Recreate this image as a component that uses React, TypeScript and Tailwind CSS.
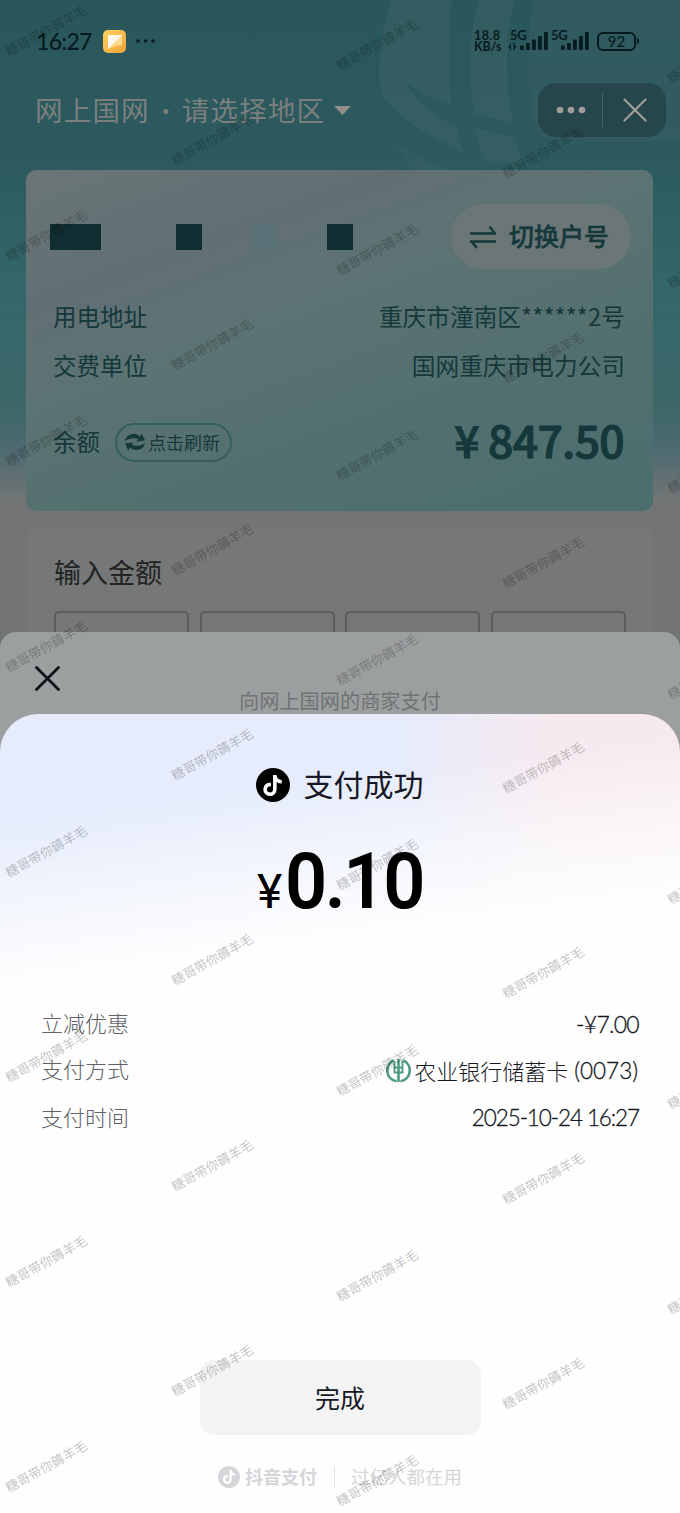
import { FaTiktok } from "react-icons/fa6"

const WATERMARK = "糖哥带你薅羊毛"

const marks: { x: number; y: number }[] = []
for (let col = 0; col < 5; col++) {
  const top = col % 2 === 0 ? 30 + (col / 2) * 13.5 : 138.5 + ((col - 1) / 2) * 13
  for (let row = 0; row < 8; row++) {
    const y = top + row * 205.2
    if (y < 1490) marks.push({ x: 46 + col * 165.5, y })
  }
}

function Watermarks() {
  return (
    <div className="pointer-events-none absolute inset-0 z-30 overflow-hidden">
      {marks.map((m, i) => (
        <span
          key={i}
          className="absolute -translate-x-1/2 -translate-y-1/2 -rotate-[29deg] whitespace-nowrap text-[13px] font-normal leading-none text-black/25"
          style={{ left: m.x, top: m.y }}
        >
          {WATERMARK}
        </span>
      ))}
    </div>
  )
}

function Signal() {
  return (
    <svg width="28" height="18" viewBox="0 0 28 18" fill="currentColor">
      <rect x="0" y="13.5" width="3.8" height="4.5" rx="1" />
      <rect x="6" y="11" width="3.8" height="7" rx="1" />
      <rect x="12" y="7.5" width="3.8" height="10.5" rx="1" />
      <rect x="18" y="4" width="3.8" height="14" rx="1" />
      <rect x="24" y="0" width="3.8" height="18" rx="1" />
    </svg>
  )
}

function StatusBar() {
  return (
    <div className="flex h-[82px] items-center pl-[36px] pr-[41px] text-[#061b1d]">
      <span className="w-[56px] whitespace-nowrap font-['Lato','Liberation_Sans',sans-serif] text-[23px] font-medium leading-none tracking-[-0.7px]">
        16:27
      </span>
      <svg className="ml-[11px]" width="23" height="23" viewBox="0 0 23 23">
        <defs>
          <linearGradient id="note" x1="0" y1="0" x2="1" y2="1">
            <stop offset="0" stopColor="#ffd45c" />
            <stop offset="1" stopColor="#eda13d" />
          </linearGradient>
        </defs>
        <rect width="23" height="23" rx="5" fill="url(#note)" />
        <path d="M5 5h14v10.500h-5.500L5 19z" fill="#ffd98d" />
        <path d="M5 5h14L5 19z" fill="#fffaf0" />
      </svg>
      <svg className="ml-[10px]" width="20" height="4" viewBox="0 0 20 4" fill="currentColor">
        <circle cx="2" cy="2" r="1.800" />
        <circle cx="9.500" cy="2" r="1.800" />
        <circle cx="17" cy="2" r="1.800" />
      </svg>
      <div className="ml-auto flex items-center">
        <div className="w-[30px] whitespace-nowrap font-['Lato',sans-serif] text-[12.500px] font-bold leading-[11px]">
          <div className="tracking-[0.4px]">18.8</div>
          <div>KB/s</div>
        </div>
        <div className="relative ml-[16px]">
          <span className="absolute -left-[10px] -top-[3px] font-['Lato',sans-serif] text-[13px] font-bold leading-none tracking-[-0.3px]">5G</span>
          <svg className="absolute -left-[12px] top-[11px]" width="9" height="8" viewBox="0 0 9 8" fill="currentColor">
            <path d="M3 0v7H1.800V4.500H0zM5.500 0h1.300v3H9l-2.200 2v2H5.500z" />
          </svg>
          <Signal />
        </div>
        <div className="relative ml-[13px]">
          <span className="absolute -left-[10px] -top-[3px] font-['Lato',sans-serif] text-[13px] font-bold leading-none tracking-[-0.3px]">5G</span>
          <Signal />
        </div>
        <div className="ml-[8px] flex items-center">
          <div className="flex h-[19px] w-[39px] items-center justify-center rounded-[6px] border-2 border-current font-['Lato',sans-serif] text-[15px] font-medium leading-none">
            92
          </div>
          <div className="ml-px h-[6px] w-[2px] rounded-r bg-current" />
        </div>
      </div>
    </div>
  )
}

function TitleBar() {
  return (
    <div className="flex h-[56px] items-center pl-[35px] pr-[14px] font-normal text-[#7a7f7e]">
      <span className="whitespace-nowrap text-[27.500px] tracking-[1.200px]">网上国网</span>
      <span className="ml-[4px] w-[24px] text-center text-[24px]">·</span>
      <span className="ml-[4px] whitespace-nowrap text-[27.500px] tracking-[1.200px]">请选择地区</span>
      <svg className="ml-[9px]" width="17" height="9" viewBox="0 0 17 9" fill="#938f8b">
        <path d="M0 0h17L8.500 9z" />
      </svg>
      <div className="ml-auto flex h-[54px] w-[128px] items-center rounded-[18px] bg-[#25464b] text-[#a19c99]">
        <svg className="ml-[18px]" width="30" height="8" viewBox="0 0 30 8" fill="currentColor">
          <circle cx="4" cy="4" r="3.300" />
          <circle cx="15" cy="4" r="3.300" />
          <circle cx="26" cy="4" r="3.300" />
        </svg>
        <div className="ml-[16px] h-[34px] w-px bg-[#45666a]" />
        <svg className="ml-[20px]" width="24" height="24" viewBox="0 0 24 24" stroke="currentColor" strokeWidth="2.200" strokeLinecap="round">
          <path d="M1.500 1.500l21 21M22.500 1.500l-21 21" />
        </svg>
      </div>
    </div>
  )
}

function AccountCard() {
  return (
    <div className="ml-[26px] mt-[32px] h-[341px] w-[627px] rounded-[10px] bg-[linear-gradient(160deg,#6a7675_0%,#626f75_22%,#5c7373_42%,#53706f_65%,#4a6e6e_100%)] px-[27px] pt-[34px] font-normal text-[#15383b]">
      <div className="flex h-[65px] items-center">
        <div className="-ml-[3px] h-[26px] w-[51px] bg-[#102d31]" />
        <div className="ml-[75px] h-[26px] w-[26px] bg-[#102d31]" />
        <div className="ml-[50px] h-[26px] w-[25px] bg-[#577477]/70" />
        <div className="ml-[50px] h-[26px] w-[26px] bg-[#102d31]" />
        <div className="-mr-[5px] ml-auto flex h-[65px] w-[180px] items-center rounded-full bg-[#6b7676] pl-[19px]">
          <svg width="26" height="24" viewBox="0 0 26 24" fill="none" stroke="currentColor" strokeWidth="2.500">
            <path d="M0 8.500h25L19.500 1.500M26 16.500H1.500L7 23" />
          </svg>
          <span className="ml-[13px] whitespace-nowrap pb-[2px] text-[25px] font-medium leading-none [-webkit-text-stroke:0.4px_currentColor]">
            切换户号
          </span>
        </div>
      </div>
      <div className="mt-[23px] flex h-[49px] items-center justify-between text-[23.500px]">
        <span>用电地址</span>
        <span className="mr-px whitespace-nowrap text-[23.700px]">
          重庆市潼南区<span className="tracking-[0.100px]">******2</span>号
        </span>
      </div>
      <div className="flex h-[49px] items-center justify-between text-[23.500px]">
        <span>交费单位</span>
        <span className="mr-px text-[23.700px]">国网重庆市电力公司</span>
      </div>
      <div className="mt-[24px] flex h-[56px] items-center">
        <span className="text-[23.500px]">余额</span>
        <div className="ml-[15px] flex h-[39px] w-[117px] items-center rounded-full border-2 border-[#355e60] pl-[8px]">
          <svg width="20" height="18" viewBox="0 0 20 18" fill="currentColor">
            <path d="M0 8C1 2 7 0 12 1.500L15.500 3.500 16.500 0 20 7.500l-8.500 1 1.500-2.500C9 4.500 4 5 0 8z" />
            <path d="M20 10c-1 6-7 8-12 6.500L4.500 14.500 3.500 18 0 10.500l8.500-1L7 12c4 1.500 9 1 13-2z" />
          </svg>
          <span className="ml-[3px] whitespace-nowrap text-[18px] leading-none">点击刷新</span>
        </div>
        <span className="ml-auto mr-[2px] whitespace-nowrap pb-[5px] text-[44.500px] font-medium leading-none tracking-[-0.700px] [-webkit-text-stroke:1.1px_currentColor]">
          ¥ 847.50
        </span>
      </div>
    </div>
  )
}

function AmountCard() {
  return (
    <div className="ml-[26px] mt-[17px] h-[120px] w-[627px] rounded-t-[10px] bg-[#767777] pl-[28px] pr-[27px] pt-[25px]">
      <div className="text-[27px] font-normal leading-[38px] text-[#222424]">输入金额</div>
      <div className="mt-[20px] flex justify-between">
        {[0, 1, 2, 3].map((i) => (
          <div key={i} className="h-[60px] w-[135px] rounded-[5px] border-2 border-[#5c5d5d]" />
        ))}
      </div>
    </div>
  )
}

function Globe() {
  return (
    <svg className="absolute right-0 top-0" width="340" height="170" viewBox="0 0 340 170" fill="#5f7374" fillOpacity="0.18">
      <path d="M52 0h60c-4 38-4 72 0 106-19-6-34-14-48-26 14 24 32 38 53 46l6 26C82 134 43 110 39 84c-1-30 3-58 13-84z" />
      <path d="M138 0h36c-9 42-9 82-1 122-15-2-27-5-39-9-6-38-5-74 4-113zM134 127c14 5 28 8 42 10l6 26h-36c-5-10-9-22-12-36z" />
      <path d="M194 0h146v140c-60 5-100 3-142-4-12-44-14-90-4-136z" opacity=".7" />
      <path d="M56 143c20 15 44 24 66 30H74c-8-10-14-20-18-30z" opacity=".7" />
    </svg>
  )
}

function BankLogo() {
  return (
    <svg width="25" height="25" viewBox="0 0 25 25" fill="none" stroke="#4d9b7d">
      <path d="M8 2.300A11 11 0 0 0 10.500 23.300M17 2.300A11 11 0 0 1 14.500 23.300" strokeWidth="2.600" />
      <path d="M12.500 1v23" strokeWidth="2.600" />
      <path d="M8.500 3v11.500h8V3M8.500 9.500h8" strokeWidth="1.800" />
    </svg>
  )
}

function PayResult() {
  return (
    <div className="absolute inset-x-0 bottom-0 top-[714px] z-20 flex flex-col items-center overflow-hidden rounded-t-[38px] bg-[#fefefe] bg-[linear-gradient(172deg,#fefefe00_0,#fefefe00_110px,#fefefe80_185px,#fefefe_275px),radial-gradient(ellipse_300px_300px_at_700px_30px,#f6e9ef_0%,#f6e9ef_50%,#f6e9ef00_100%),linear-gradient(#e6ecfb,#e6edfc)]">
      <div className="mt-[46px] flex h-[50px] items-center">
        <div className="flex size-[34px] items-center justify-center rounded-full bg-black text-white">
          <FaTiktok size={21} />
        </div>
        <span className="ml-[14px] mr-px whitespace-nowrap pb-[4px] text-[30px] font-normal leading-none text-[#171725]">支付成功</span>
      </div>
      <div className="mt-[30px] flex h-[84px] items-baseline text-black">
        <span className="font-['Roboto',sans-serif] text-[48px] font-normal leading-[84px]">¥</span>
        <span className="-mr-[3px] scale-x-[0.96] whitespace-nowrap font-['Roboto',sans-serif] text-[77px] font-semibold leading-[84px] tracking-[-2.500px]">
          0.10
        </span>
      </div>
      <div className="mt-[77px] w-full px-[41px] text-[22px] text-[#606167]">
        <div className="flex h-[46px] items-center justify-between">
          <span className="pb-[3px]">立减优惠</span>
          <span className="font-['Lato',sans-serif] text-[23px] tracking-[-0.700px] text-[#161823] [-webkit-text-stroke:0.3px_currentColor]">
            -¥7.00
          </span>
        </div>
        <div className="flex h-[46px] items-center justify-between">
          <span className="pb-[3px]">支付方式</span>
          <span className="flex items-center whitespace-nowrap text-[#161823]">
            <BankLogo />
            <span className="ml-[3px]">农业银行储蓄卡</span>
            <span className="ml-[6px] mr-px pt-[2px] font-['Lato',sans-serif] text-[22.500px] [-webkit-text-stroke:0.3px_currentColor]">
              (0073)
            </span>
          </span>
        </div>
        <div className="flex h-[48px] items-center justify-between">
          <span className="pb-[2px]">支付时间</span>
          <span className="pt-[2px] font-['Lato',sans-serif] text-[22.500px] tracking-[-1.100px] text-[#161823] [-webkit-text-stroke:0.3px_currentColor]">
            2025-10-24 16:27
          </span>
        </div>
      </div>
      <button className="mb-[29px] mt-auto h-[75px] w-[281px] rounded-[14px] bg-[#f3f3f3] text-[25px] font-normal text-[#161823]">完成</button>
      <div className="mb-[23px] flex h-[26px] items-center text-[18px] leading-none text-[#d5d6d9]">
        <div className="flex size-[22px] items-center justify-center rounded-full bg-[#d5d6d9] text-white">
          <FaTiktok size={14} />
        </div>
        <span className="ml-[5px] pb-[2px] font-bold">抖音支付</span>
        <div className="ml-[17px] mr-[16px] h-[20px] w-px bg-[#e3e3e5]" />
        <span className="pb-[2px] text-[18.500px] font-normal">过亿人都在用</span>
      </div>
    </div>
  )
}

export default function App() {
  return (
    <div className="relative h-[1513px] w-[680px] overflow-hidden bg-[#727574] font-['Noto_Sans_CJK_SC',sans-serif] font-light">
      <div className="relative h-[640px] bg-[linear-gradient(to_bottom,#2a575c_0,#2c5a5e_160px,#34686a_300px,#3e6769_410px,#4d6a70_450px,#727574_500px)]">
        <Globe />
        <div className="relative">
          <StatusBar />
          <TitleBar />
          <AccountCard />
          <AmountCard />
        </div>
      </div>
      <div className="absolute inset-x-0 top-[632px] z-10 h-[140px] rounded-t-[16px] bg-[#9c9f9f] pt-[34px]">
        <svg className="ml-[35px]" width="25" height="25" viewBox="0 0 25 25" stroke="#101216" strokeWidth="2.800" strokeLinecap="round">
          <path d="M1.500 1.500l22 22M23.500 1.500l-22 22" />
        </svg>
        <div className="-mt-[6px] text-center text-[20.200px] font-normal leading-[32px] text-[#707374]">向网上国网的商家支付</div>
      </div>
      <PayResult />
      <Watermarks />
    </div>
  )
}
